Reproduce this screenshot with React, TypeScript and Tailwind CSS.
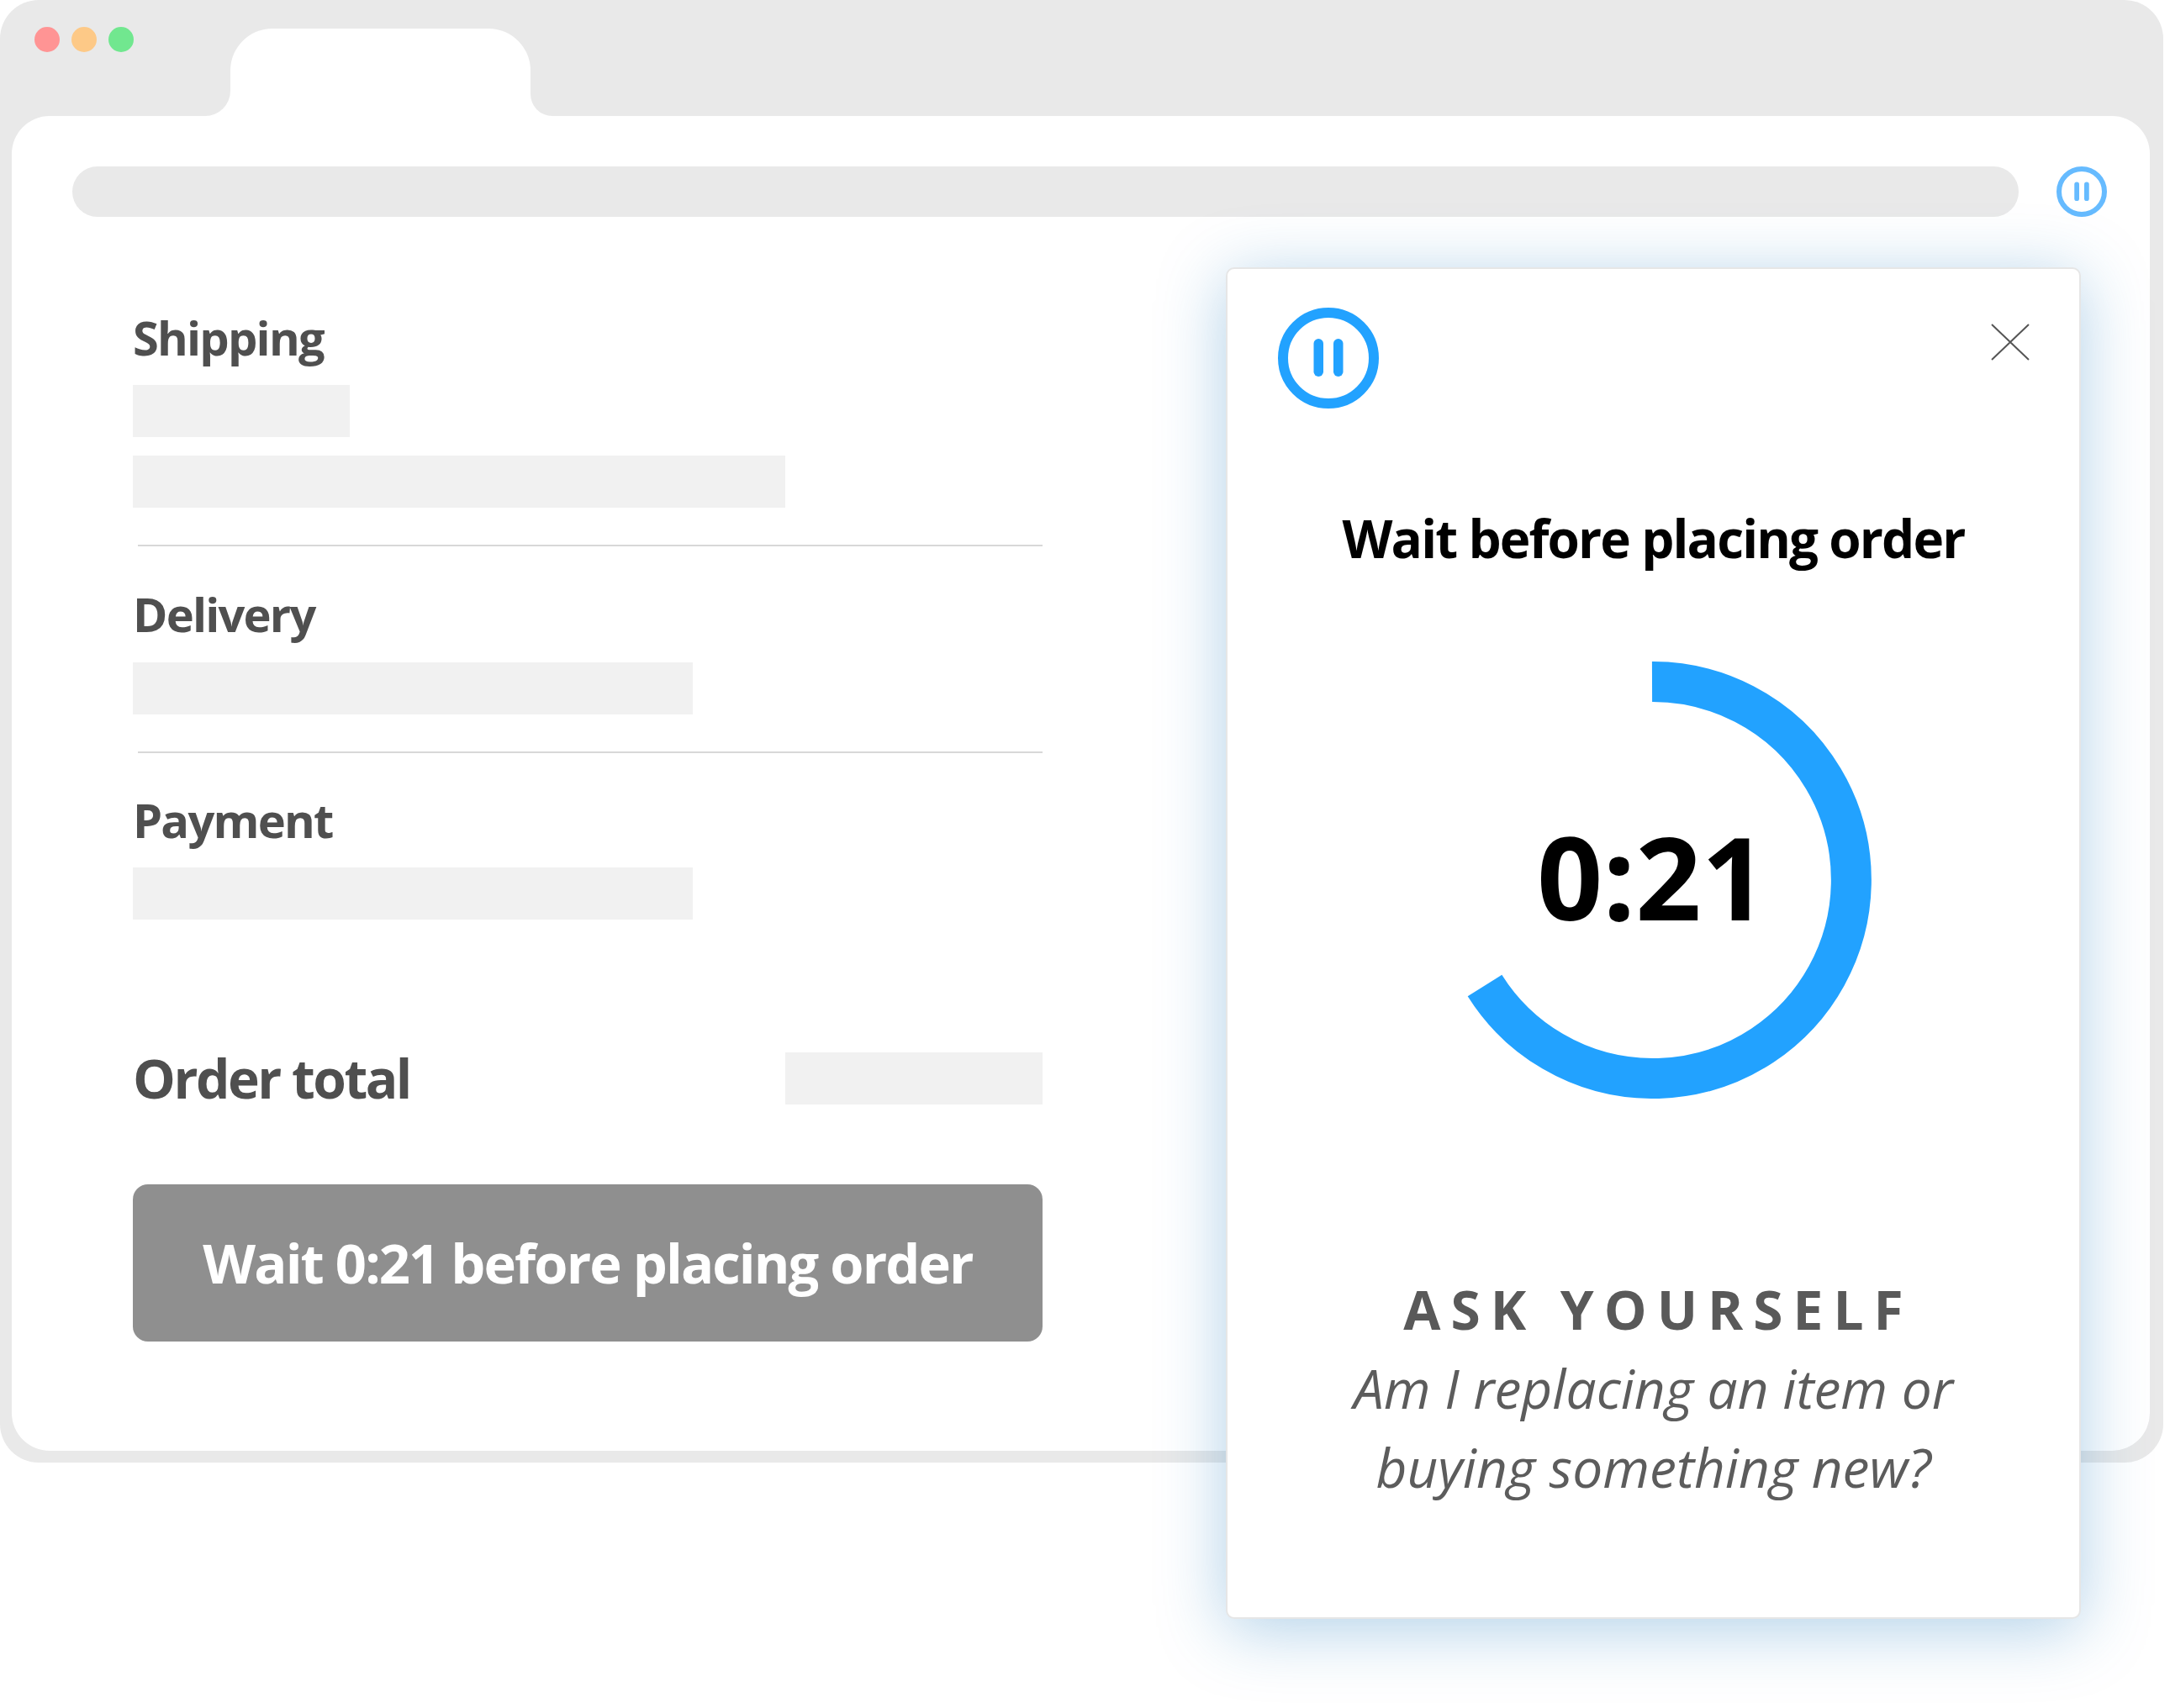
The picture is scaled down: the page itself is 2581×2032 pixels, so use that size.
function PauseIcon({ size, color }: { size: number; color: string }) {
  return (
    <svg width={size} height={size} viewBox="0 0 120 120" className="block shrink-0">
      <circle cx="60" cy="60" r="54" fill="none" stroke={color} strokeWidth="12" />
      <rect x="42.5" y="37" width="11.5" height="45" rx="5.75" fill={color} />
      <rect x="66" y="37" width="11.5" height="45" rx="5.75" fill={color} />
    </svg>
  );
}

function Label({ children }: { children: string }) {
  return <div className="h-[58px] text-[56px] leading-[58px] font-bold text-[#4f4f4f] tracking-[-1.8px]">{children}</div>;
}

export default function App() {
  return (
    <div className="relative w-[2581px] h-[2032px] bg-white overflow-hidden font-['Open_Sans',sans-serif] font-stretch-[88%]">
      <div className="w-[2573px] h-[1740px] bg-[#e9e9e9] rounded-[46px] flex flex-col">
        <div className="h-[138px] shrink-0 flex items-start">
          <div className="flex gap-[14px] pl-[41px] pt-[32px]">
            <div className="w-[30px] h-[30px] rounded-full bg-[#ff9494]" />
            <div className="w-[30px] h-[30px] rounded-full bg-[#fdc987]" />
            <div className="w-[30px] h-[30px] rounded-full bg-[#71e78f]" />
          </div>
          <div className="relative ml-[115px] mt-[34px] w-[357px] h-[104px] bg-white rounded-t-[50px]">
            <div className="absolute -left-[30px] bottom-0 w-[30px] h-[30px] bg-white">
              <div className="w-full h-full bg-[#e9e9e9] rounded-br-[30px]" />
            </div>
            <div className="absolute -right-[26px] bottom-0 w-[26px] h-[26px] bg-white">
              <div className="w-full h-full bg-[#e9e9e9] rounded-bl-[26px]" />
            </div>
          </div>
        </div>
        <div className="ml-[14px] w-[2543px] h-[1588px] bg-white rounded-[45px]">
          <div className="flex items-center pt-[60px] pl-[72px]">
            <div className="w-[2315px] h-[60px] rounded-full bg-[#e9e9e9]" />
            <div className="ml-[45px]">
              <PauseIcon size={60} color="#66bbff" />
            </div>
          </div>
          <div className="ml-[144px] w-[1082px] pt-[114px]">
            <Label>Shipping</Label>
            <div className="mt-[28px] w-[258px] h-[62px] bg-[#f1f1f1]" />
            <div className="mt-[22px] w-[776px] h-[62px] bg-[#f1f1f1]" />
            <div className="mt-[44px] ml-[6px] h-[2px] bg-[#d8d8d8]" />
            <div className="mt-[51px]">
              <Label>Delivery</Label>
            </div>
            <div className="mt-[29px] w-[666px] h-[62px] bg-[#f1f1f1]" />
            <div className="mt-[44px] ml-[6px] h-[2px] bg-[#d8d8d8]" />
            <div className="mt-[50px]">
              <Label>Payment</Label>
            </div>
            <div className="mt-[28px] w-[666px] h-[62px] bg-[#f1f1f1]" />
            <div className="mt-[158px] flex items-center justify-between h-[62px]">
              <div className="text-[64px] leading-[76px] font-bold text-[#4f4f4f] tracking-[-2.5px]">Order total</div>
              <div className="w-[306px] h-[62px] bg-[#f1f1f1]" />
            </div>
            <div className="mt-[95px] h-[187px] rounded-[18px] bg-[#8f8f8f] flex items-center justify-center text-white text-[65px] font-bold tracking-[-1.9px]">
              Wait 0:21 before placing order
            </div>
          </div>
        </div>
      </div>

      <div className="absolute left-[1458px] top-[318px] w-[1017px] h-[1608px] bg-white border-2 border-[#e6e6e6] rounded-[10px] shadow-[0_12px_80px_rgba(30,120,190,0.35)]">
        <div className="flex justify-between items-start pl-[60px] pr-[52px] pt-[46px]">
          <PauseIcon size={120} color="#22a2ff" />
          <svg width="46" height="44" viewBox="0 0 46 44" className="mt-[19px] mr-[7px]">
            <path d="M1 1L45 43M45 1L1 43" fill="none" stroke="#555" strokeWidth="2" />
          </svg>
        </div>
        <div className="mt-[116px] h-[80px] text-center text-[62px] leading-[76px] font-bold text-black tracking-[-1.9px]">
          Wait before placing order
        </div>
        <div className="relative mt-[105px] ml-[248px] w-[520px] h-[520px]">
          <svg width="520" height="520" viewBox="0 0 520 520" className="block">
            <path d="M257 24A236 236 0 1 1 58 385.5" fill="none" stroke="#22a2ff" strokeWidth="48" />
          </svg>
          <div className="absolute inset-0 flex items-center justify-center pb-[8px] pr-[6px] text-[137px] font-bold text-black">0:21</div>
        </div>
        <div className="mt-[211px] h-[80px] pl-[12px] text-center text-[64px] leading-[80px] font-bold text-[#595959] tracking-[12px]">ASK YOURSELF</div>
        <div className="mt-[7px] text-center text-[64px] leading-[94px] italic text-[#5c5c5c]">
          <div>Am I replacing an item or</div>
          <div>buying something new?</div>
        </div>
      </div>
    </div>
  );
}
